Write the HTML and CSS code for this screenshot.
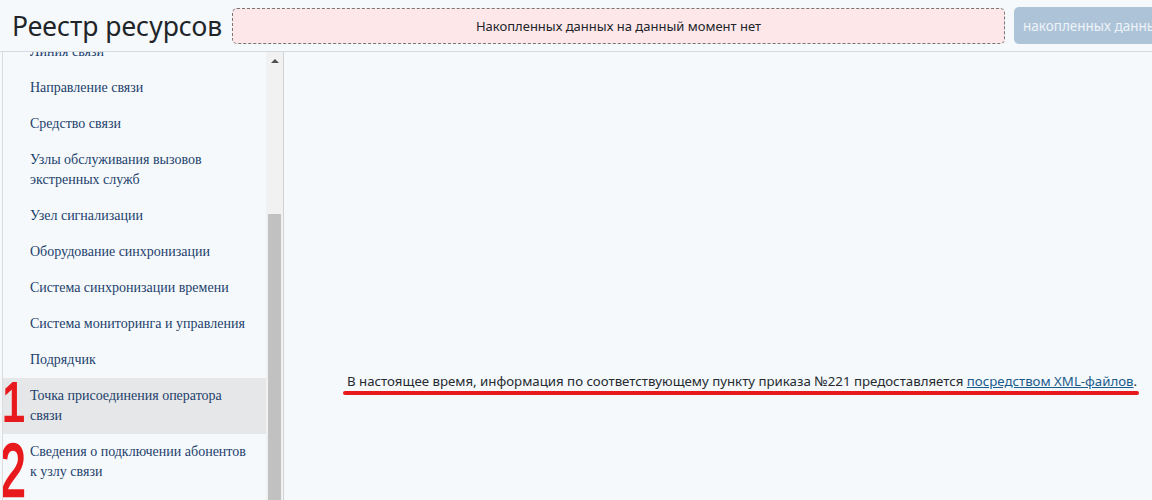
FILE: index.html
```html
<!DOCTYPE html>
<html lang="ru">
<head>
    <meta charset="UTF-8">
    <meta name="viewport" content="width=device-width, initial-scale=1.0">
    <title>Реестр ресурсов</title>
    <link rel="stylesheet" href="styles.css">
</head>
<body>
    <div class="header">
        <h1 class="title">Реестр ресурсов</h1>
        <div class="notice">Накопленных данных на данный момент нет</div>
        <button class="send-btn" disabled>накопленных данных нет</button>
    </div>

    <div class="layout">
        <div class="sidebar">
            <div class="menu-wrap">
                <ul class="menu">
                    <li>Линия связи</li>
                    <li>Направление связи</li>
                    <li>Средство связи</li>
                    <li>Узлы обслуживания вызовов экстренных служб</li>
                    <li>Узел сигнализации</li>
                    <li>Оборудование синхронизации</li>
                    <li>Система синхронизации времени</li>
                    <li>Система мониторинга и управления</li>
                    <li>Подрядчик</li>
                    <li class="active"><span class="mark mark-one">1</span>Точка присоединения оператора связи</li>
                    <li><span class="mark mark-two">2</span>Сведения о подключении абонентов к узлу связи</li>
                </ul>
            </div>
            <div class="scrollbar">
                <div class="arrow-up"></div>
                <div class="thumb"></div>
            </div>
        </div>

        <div class="content">
            <p class="info">В настоящее время, информация по соответствующему пункту приказа №221 предоставляется <a href="#">посредством XML-файлов</a>.</p>
        </div>
    </div>
</body>
</html>
```

FILE: styles.css
```css
body {
    margin: 0;
    background: #f5f9fc;
    font-family: "Noto Sans", "Open Sans", sans-serif;
    color: #212529;
    overflow: hidden;
}
.header {
    display: flex;
    align-items: center;
    height: 51px;
    padding-left: 12px;
    border-bottom: 1px solid #d6dbe0;
    white-space: nowrap;
}
.title {
    margin: 0 10px 0 0;
    font-size: 26.5px;
    font-weight: normal;
    width: 210px;
    flex-shrink: 0;
}
.notice {
    flex-shrink: 0;
    width: 771px;
    height: 34px;
    line-height: 34px;
    background: #fde7e9;
    border: 1px dashed #777;
    border-radius: 5px;
    text-align: center;
    font-size: 13px;
    color: #212529;
}
.send-btn {
    flex-shrink: 0;
    margin-left: 9px;
    height: 37px;
    padding: 0 9px;
    border: none;
    border-radius: 5px;
    background: #adc4d8;
    color: #eef3f8;
    font-family: inherit;
    font-size: 13.5px;
}
.layout {
    display: flex;
    height: 448px;
}
.sidebar {
    display: flex;
    margin-left: 2px;
    width: 280px;
    border-left: 1px solid #dcdcdc;
    border-right: 1px solid #d4d4d4;
}
.menu-wrap {
    flex: 1;
    overflow: hidden;
}
.menu {
    list-style: none;
    margin: -18px 0 0 0;
    padding: 0;
    font-family: "Liberation Serif", serif;
    font-size: 14px;
    color: #1d3f6c;
}
.menu li {
    position: relative;
    padding: 8px 20px 8px 27px;
    line-height: 20px;
}
.menu li.active {
    background: #e6e7e8;
}
.mark {
    position: absolute;
    font-family: "Liberation Sans", sans-serif;
    font-size: 44px;
    line-height: 1;
    color: #e8191d;
    -webkit-text-stroke: 1.5px #e8191d;
    transform-origin: top left;
}
.mark-one {
    left: -1px;
    top: -4px;
    transform: scale(0.95, 1.28);
}
.mark-two {
    left: -3px;
    top: -1px;
    transform: scale(1.05, 1.7);
}
.scrollbar {
    width: 17px;
    background: #f1f1f1;
    display: flex;
    flex-direction: column;
    align-items: center;
}
.arrow-up {
    margin-top: 7px;
    width: 0;
    height: 0;
    border-left: 4px solid transparent;
    border-right: 4px solid transparent;
    border-bottom: 4px solid #505050;
}
.thumb {
    margin-top: 151px;
    width: 13px;
    flex: 1;
    background: #c1c1c1;
}
.content {
    flex: 1;
    padding: 317px 0 0 63px;
    white-space: nowrap;
}
.info {
    position: relative;
    display: inline-block;
    margin: 0;
    font-size: 13.25px;
    line-height: 20px;
    color: #262b30;
}
.info::after {
    content: "";
    position: absolute;
    left: -4px;
    right: -2px;
    bottom: -4px;
    height: 4px;
    border-radius: 2px;
    background: #e8191d;
}
.info a {
    color: #1a5b8c;
}
```
